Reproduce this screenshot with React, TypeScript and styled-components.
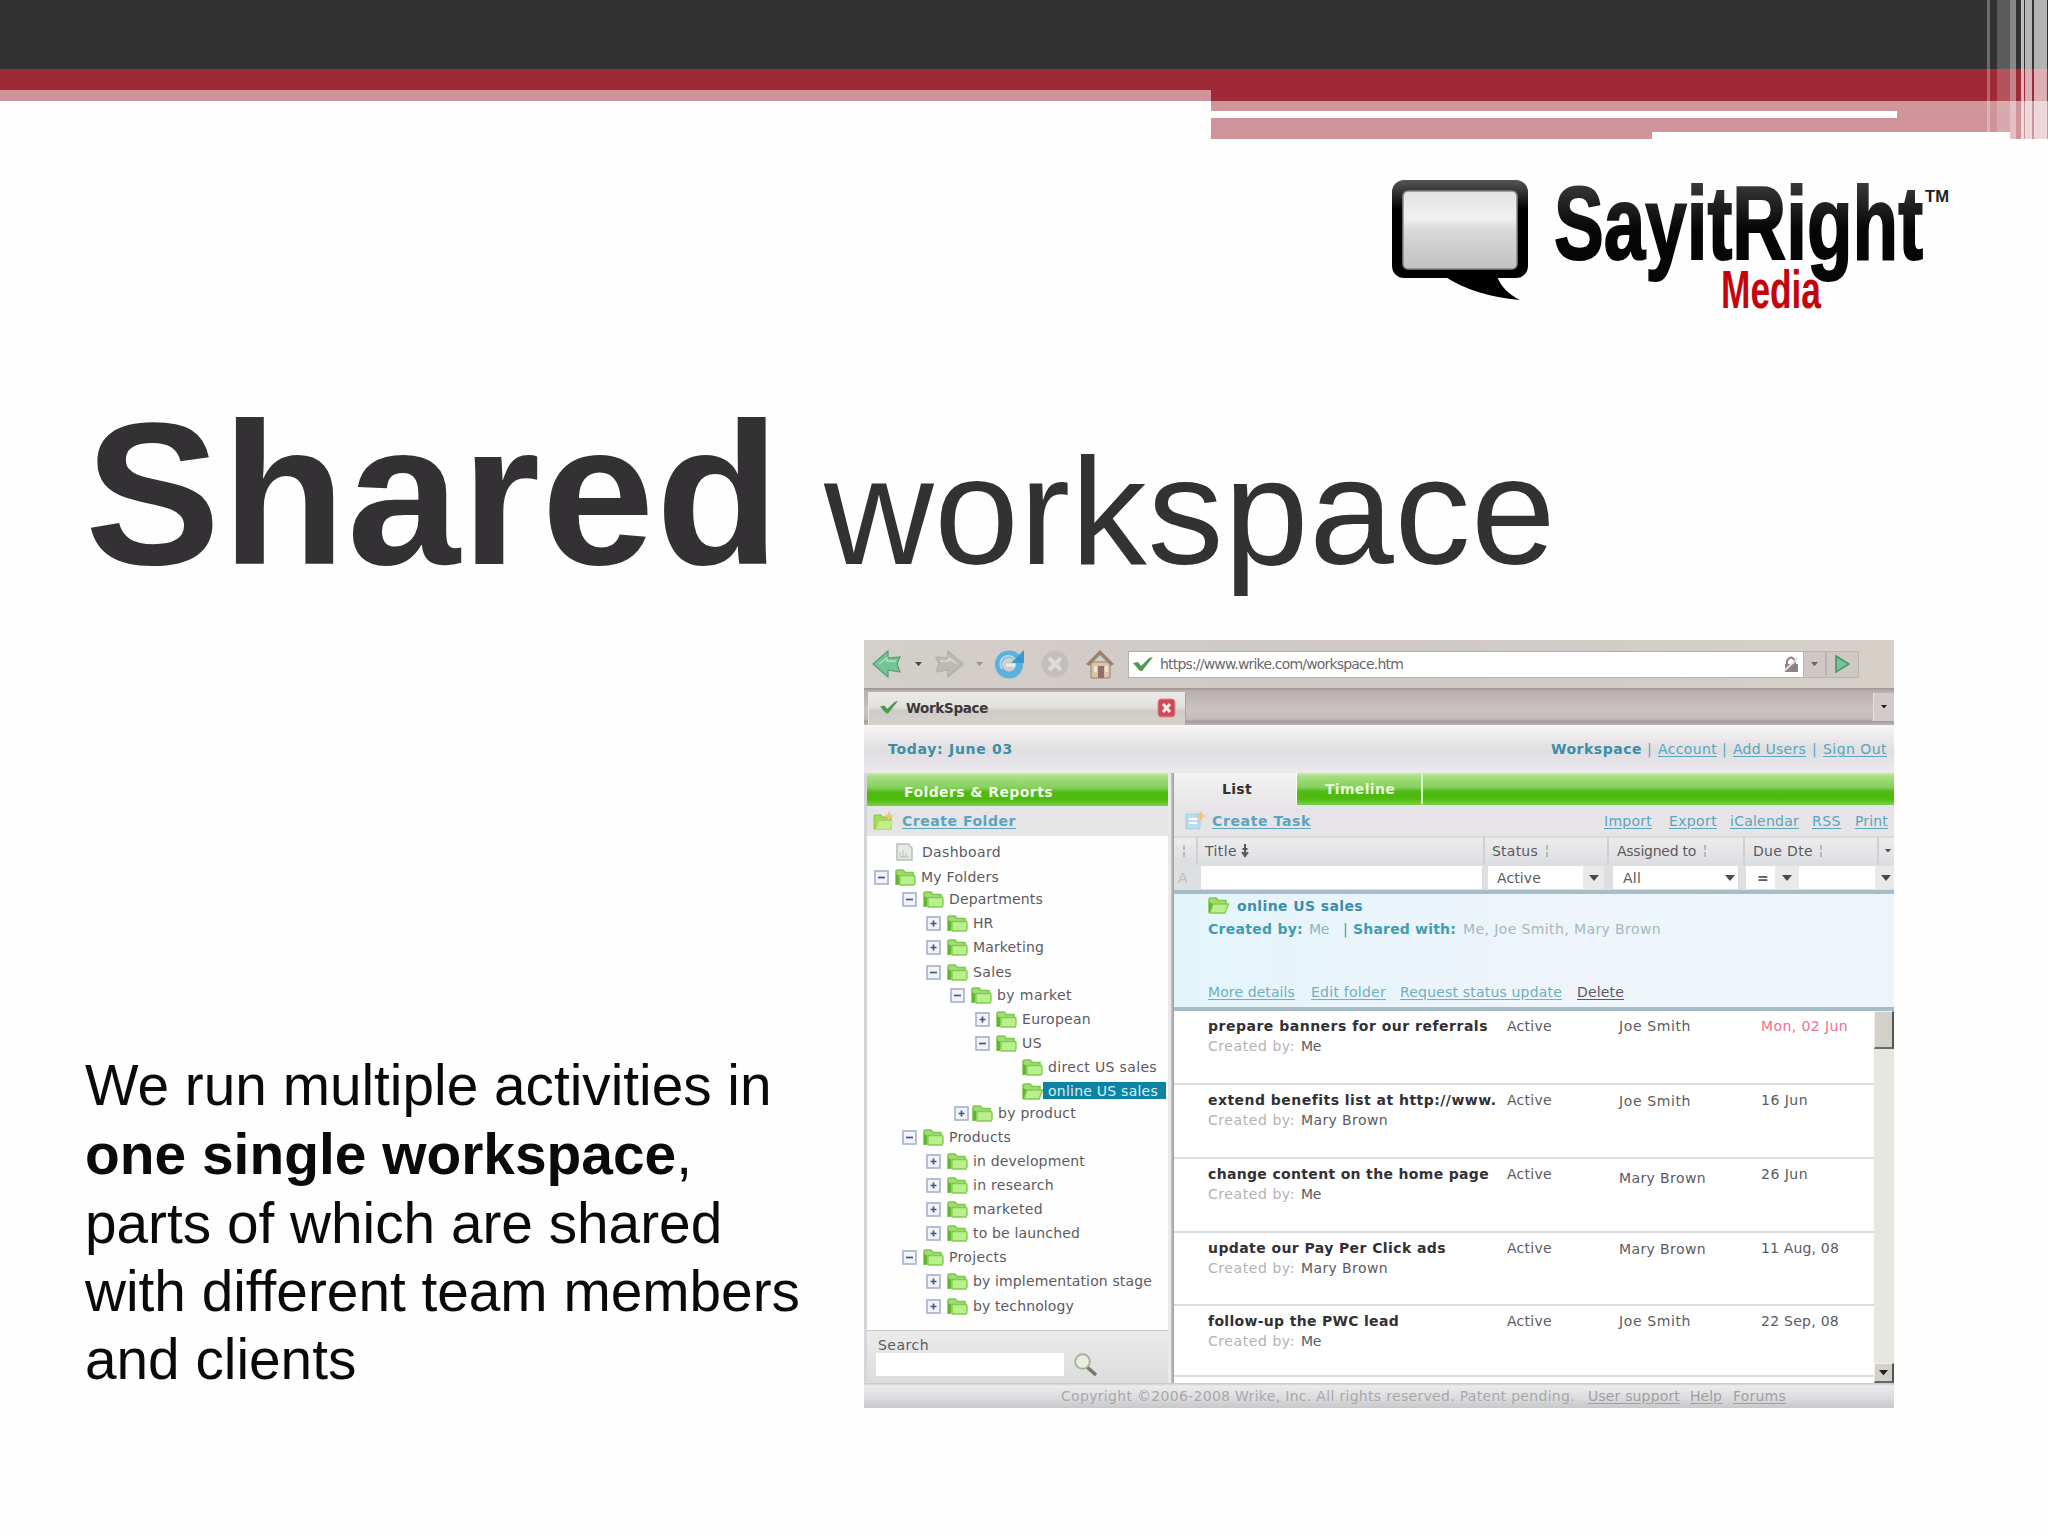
import React, { useLayoutEffect, useRef, useState } from "react";
import styled, { createGlobalStyle, css } from "styled-components";

const Global = createGlobalStyle`
  * { box-sizing: border-box; }
  body { margin: 0; background: #fefefe; font-family: "Liberation Sans", Arial, sans-serif; }
  h1, p { margin: 0; font-weight: normal; }
`;

/* ---------- slide ---------- */
const Slide = styled.div`
  width: 2048px;
  height: 1536px;
  overflow: hidden;
  background: #fefefe;
  display: flex;
  flex-direction: column;
`;
const Banner = styled.header`
  position: relative;
  height: 139px;
  flex: none;
`;
const Band = styled.div<{ h: number; c: string }>`
  height: ${(p) => p.h}px;
  background: ${(p) => p.c};
`;
const BandRow = styled.div`
  display: grid;
  grid-template-columns: 1211px 1fr;
`;
const WhiteRule = styled.div`
  height: 7px;
  background: #d0939a;
  &::before {
    content: "";
    display: block;
    height: 7px;
    width: 686px;
    background: #fff;
  }
`;
const Notch = styled.div`
  position: absolute;
  left: 1652px;
  top: 132px;
  width: 358px;
  height: 7px;
  background: #fefefe;
`;
const Stripe = styled.div<{ x: number; w: number; a: number }>`
  position: absolute;
  top: 0;
  left: ${(p) => p.x}px;
  width: ${(p) => p.w}px;
  height: 139px;
  background: rgba(255, 255, 255, ${(p) => p.a});
`;
const LogoRow = styled.div`
  height: 191px;
  padding: 31px 88px 0 0;
  display: flex;
  justify-content: flex-end;
  flex: none;
`;
const Heading = styled.h1`
  height: 310px;
  flex: none;
  padding: 48px 0 0 85px;
  color: #333134;
  font-size: 152px;
  line-height: 232px;
  letter-spacing: 0.65px;
  white-space: nowrap;
  b { font-size: 203px; letter-spacing: 1.3px; }
`;
const Content = styled.main`
  display: flex;
  align-items: flex-start;
`;
const Blurb = styled.p`
  width: 864px;
  flex: none;
  padding: 412px 0 0 85px;
  font-size: 56.75px;
  line-height: 68.3px;
  color: #0a0a0a;
  white-space: nowrap;
  b { font-size: 56.9px; }
`;

/* ---------- fitted text ---------- */
const Label = styled.span<{ $ml?: number; $b?: boolean; $u?: boolean; $c?: string; $s?: number; $dy?: number }>`
  display: inline-block;
  flex: none;
  width: max-content;
  white-space: pre;
  font-family: "DejaVu Sans", Verdana, sans-serif;
  font-size: ${(p) => p.$s ?? 14}px;
  line-height: 20px;
  font-weight: ${(p) => (p.$b ? 700 : 400)};
  color: ${(p) => p.$c ?? "#5c5a60"};
  margin-left: ${(p) => p.$ml ?? 0}px;
  margin-top: ${(p) => p.$dy ?? 0}px;
  ${(p) => p.$u && css`text-decoration: underline; text-underline-offset: 2px;`}
`;
type TProps = { children: string; w: number; ml?: number; b?: boolean; u?: boolean; c?: string; s?: number; dy?: number };
function T({ children, w, ml, b, u, c, s, dy }: TProps) {
  const ref = useRef<HTMLSpanElement>(null);
  const [ls, setLs] = useState(0);
  useLayoutEffect(() => {
    if (ref.current) setLs((w - ref.current.getBoundingClientRect().width) / children.length);
  }, []);
  return (
    <Label ref={ref} $ml={ml} $b={b} $u={u} $c={c} $s={s} $dy={dy} style={{ letterSpacing: ls }}>
      {children}
    </Label>
  );
}

/* ---------- browser window ---------- */
const Window = styled.section`
  width: 1030px;
  height: 768px;
  flex: none;
  overflow: hidden;
  display: flex;
  flex-direction: column;
  background: #fff;
`;
const Bar = styled.div<{ h: number; bg: string }>`
  height: ${(p) => p.h}px;
  flex: none;
  display: flex;
  align-items: center;
  background: ${(p) => p.bg};
`;
const Gap = styled.span<{ w: number }>`
  width: ${(p) => p.w}px;
  flex: none;
`;
const Grow = styled.span`
  flex: 1;
`;
const UrlBox = styled.div`
  width: 675px;
  height: 27px;
  margin-left: 14px;
  background: #fff;
  border: 1px solid #b4aeac;
  border-right: 0;
  display: flex;
  align-items: center;
  padding: 0 3px 0 4px;
`;
const NavButton = styled.div<{ w: number }>`
  width: ${(p) => p.w}px;
  height: 27px;
  border: 1px solid #bbb5b1;
  background: #cdc8c3;
  display: flex;
  align-items: center;
  justify-content: center;
`;
const Tab = styled.div`
  width: 318px;
  height: 33px;
  margin: 3px 0 0 4px;
  display: flex;
  align-items: center;
  border: 1px solid #e9e7e4;
  border-right-color: #aaa3a1;
  border-bottom: 0;
  background: linear-gradient(#eceae6, #e3e1dc 45%, #cfcbc7 55%, #d5d1cd);
  padding: 0 9px 2px 11px;
`;
const TabMenu = styled.div`
  width: 21px;
  height: 28px;
  background: #d1ccc9;
  border-left: 1px solid #e6e2e0;
  display: flex;
  align-items: center;
  justify-content: center;
`;
const Panes = styled.div`
  height: 610px;
  display: flex;
`;
const Sidebar = styled.div`
  width: 307px;
  flex: none;
  display: flex;
  flex-direction: column;
  border-left: 3px solid #d5d4d8;
  border-right: 3px solid #e9e9e9;
`;
const Divider = styled.div`
  width: 3px;
  background: linear-gradient(90deg, #c9c9c9, #9a9a9e);
`;
const Tasks = styled.div`
  width: 720px;
  flex: none;
  display: flex;
  flex-direction: column;
`;
const green = "linear-gradient(#c3e9a6, #a4df7f 12%, #86cf5c 45%, #4fb914 58%, #4dbb0b 80%, #7dd04c)";
const Tree = styled.div`
  height: 494px;
  padding-top: 4px;
  background: #fefefe;
`;
const TreeRow = styled.div<{ h: number }>`
  height: ${(p) => p.h}px;
  display: flex;
  align-items: flex-start;
  & > * { height: 24px; line-height: 24px; }
`;
const TreeCell = styled.span<{ w: number }>`
  width: ${(p) => p.w}px;
  flex: none;
  display: flex;
  align-items: center;
`;
const Selected = styled.span`
  display: flex;
  align-items: center;
  && { height: 17px; margin-top: 3px; line-height: 17px; }
  width: 123px;
  background: #0d83a3;
  margin-left: -5px;
`;
const SearchBox = styled.div`
  height: 53px;
  flex: none;
  border-top: 1px solid #c9c9c9;
  background: linear-gradient(#ebebeb, #dcdcdc);
  padding: 4px 0 0 9px;
`;
const SearchLine = styled.div`
  display: flex;
  align-items: center;
  gap: 9px;
  margin-top: -2px;
`;
const Field = styled.div<{ w: number }>`
  width: ${(p) => p.w}px;
  height: 23px;
  flex: none;
  display: flex;
  align-items: center;
  background: #fff;
`;
const DropCell = styled.div<{ w: number }>`
  width: ${(p) => p.w}px;
  height: 23px;
  background: #e9e9ea;
  display: flex;
  align-items: center;
  justify-content: center;
  flex: none;
`;
const ListTab = styled.div`
  width: 123px;
  height: 33px;
  background: linear-gradient(#f4f3f4, #e7e5e7);
  display: flex;
  align-items: center;
  border-right: 1px solid #fff;
`;
const TimelineTab = styled.div`
  width: 124px;
  height: 31px;
  align-self: flex-start;
  display: flex;
  align-items: center;
  border-right: 2px solid #d5f3c3;
`;
const Col = styled.div<{ w: number }>`
  width: ${(p) => p.w}px;
  height: 100%;
  flex: none;
  display: flex;
  align-items: center;
  border-right: 2px solid #d0d0d2;
`;
const Summary = styled.div`
  height: 121px;
  flex: none;
  border-top: 4px solid #a6bcc6;
  border-bottom: 4px solid #a6bcc6;
  background: linear-gradient(90deg, #e3f5fb, #eef4fa 50%, #edf5fb);
  padding: 0 0 0 34px;
`;
const Line = styled.div<{ h: number; top?: number }>`
  height: ${(p) => p.h}px;
  margin-top: ${(p) => p.top ?? 0}px;
  display: flex;
  align-items: center;
`;
const ListBody = styled.div`
  flex: 1;
  display: flex;
  overflow: hidden;
`;
const Rows = styled.div`
  width: 700px;
`;
const TaskRow = styled.div<{ h: number }>`
  height: ${(p) => p.h}px;
  border-bottom: 2px solid #dcdcde;
  padding: 5px 0 0 34px;
  display: grid;
  grid-template-columns: 299px 112px 142px 1fr;
  align-items: start;
`;
const TaskTitle = styled.div`
  display: flex;
  flex-direction: column;
  align-items: flex-start;
`;
const Scroll = styled.div`
  width: 20px;
  background: #e6e7df;
  display: flex;
  flex-direction: column;
  justify-content: space-between;
`;
const Thumb = styled.div<{ h: number }>`
  height: ${(p) => p.h}px;
  background: #d3d0c9;
  border: 1px solid #efeeea;
  border-right: 2px solid #55534f;
  border-bottom: 2px solid #6b6965;
  display: flex;
  align-items: center;
  justify-content: center;
`;

/* ---------- icons ---------- */
const Caret = ({ s = 10, c = "#4a4a4a" }: { s?: number; c?: string }) => (
  <svg width={s} height={s * 0.6} viewBox="0 0 10 6"><path d="M0 0h10L5 6z" fill={c} /></svg>
);
const Check = ({ s = 20 }: { s?: number }) => (
  <svg width={s} height={s * 0.75} viewBox="0 0 20 15"><path d="M0 6l5-1 3 4L16 1l4-1L9 14H7z" fill="#4d9a50" /></svg>
);
const Folder = ({ open }: { open?: boolean }) => (
  <svg width="21" height="17" viewBox="0 0 21 17">
    <path d="M1 16V2.500Q1 1 2.500 1H8l2.500 2.500H18V7" fill="#9fdd73" stroke="#7cc94c" strokeWidth="1.600" />
    <path d="M1 15.500V5l3 1.500V16z" fill="#62b62d" />
    <path d={open ? "M5 7h15.500L17 16H2z" : "M5 6.500h14.500L20 8v6l-1 2H5z"} fill="#b9f08d" stroke="#82cc52" strokeWidth="1.400" />
  </svg>
);
const Toggle = ({ plus }: { plus?: boolean }) => (
  <svg width="15" height="15" viewBox="0 0 15 15">
    <rect x="1" y="1" width="13" height="13" fill="#f0f3f8" stroke="#a5afca" strokeWidth="1.600" />
    <path d={plus ? "M4.500 7.500h6M7.500 4.500v6" : "M4 7.500h7"} stroke="#4c5680" strokeWidth="1.700" />
  </svg>
);
const Page = () => (
  <svg width="17" height="18" viewBox="0 0 17 18">
    <path d="M1 1h11l4 4v12H1z" fill="#e7ebe6" stroke="#b7bdb7" strokeWidth="1.500" />
    <path d="M4 14V9M7 14V7M10 14v-4M4 14h9" stroke="#c3cbc2" strokeWidth="1.300" />
  </svg>
);
const NavArrow = ({ fill, line, flip }: { fill: string; line: string; flip?: boolean }) => (
  <svg width="30" height="28" viewBox="0 0 30 28">
    <g transform={flip ? "translate(30 0) scale(-1 1)" : undefined}>
      <path d="M1 14L16 1v7l12-1-3 7 3 8-12-2v7z" fill={fill} stroke={line} strokeWidth="1.200" />
      <path d="M7 14l8-6v3h9" fill="none" stroke="#fff" strokeOpacity=".45" strokeWidth="1.500" />
    </g>
  </svg>
);
const Reload = () => (
  <svg width="31" height="30" viewBox="0 0 31 30">
    <circle cx="15" cy="15.500" r="10.500" fill="none" stroke="#5cb0dc" strokeWidth="7" />
    <path d="M17 14L30 1v13z" fill="#3e98cc" />
    <path d="M8 20a8 8 0 0 1 13-10" fill="none" stroke="#a9dbf3" strokeWidth="2" />
    <path d="M12 16h9" stroke="#dff1fa" strokeWidth="3" />
  </svg>
);
const Stop = () => (
  <svg width="30" height="30" viewBox="0 0 30 30">
    <circle cx="15" cy="15" r="13.500" fill="#c3bfbb" />
    <path d="M9 9l12 12M21 9L9 21" stroke="#dedbd8" strokeWidth="4" />
  </svg>
);
const Home = () => (
  <svg width="28" height="30" viewBox="0 0 28 30">
    <path d="M5 13h19v16H5z" fill="#dcc3a8" stroke="#98816c" />
    <path d="M0 15L14 1l14 14-3 2L14 6 3 17z" fill="#9c8170" />
    <path d="M12 17h6v12h-6z" fill="#8c7362" />
    <path d="M8 17h3v6H8zM19 17h3v6h-3z" fill="#f0e3d4" />
  </svg>
);
const Lock = () => (
  <svg width="17" height="18" viewBox="0 0 17 18">
    <path d="M2 9h13v8H2z" fill="#8e8186" /><path d="M4 9V6q4-7 8 0v3" fill="none" stroke="#8e8186" strokeWidth="2" />
    <path d="M1 16L15 3" stroke="#e6e0e1" strokeWidth="2" />
  </svg>
);
const Play = () => (
  <svg width="15" height="18" viewBox="0 0 15 18"><path d="M1 1l13 8L1 17z" fill="#7fbf97" stroke="#45966a" strokeWidth="1.600" /></svg>
);
const CloseTab = () => (
  <svg width="19" height="20" viewBox="0 0 19 20">
    <rect x="1" y="1" width="17" height="18" rx="3" fill="#cf4a58" stroke="#dd8d95" />
    <path d="M6 6l7 8M13 6l-7 8" stroke="#fbe9ea" strokeWidth="3" />
  </svg>
);
const NewItem = ({ blue }: { blue?: boolean }) => (
  <svg width="22" height="20" viewBox="0 0 22 20">
    <path d={blue ? "M1 3h14v15H1z" : "M1 4h7l2 2h8v12H1z"} fill={blue ? "#b9dcf2" : "#a4d95a"} stroke={blue ? "#a5cee8" : "#8cc64a"} />
    <path d={blue ? "M4 8h8M4 12h8" : "M6 10h14l-3 8H3z"} fill={blue ? "none" : "#c7ec85"} stroke={blue ? "#fff" : "none"} strokeWidth="2" />
    <path d="M16 0l1.500 3.500L21 5l-3.500 1.500L16 10l-1.500-3.500L11 5l3.500-1.500z" fill="#f6c274" />
  </svg>
);
const SortMark = ({ dark }: { dark?: boolean }) => (
  <svg width="8" height="14" viewBox="0 0 8 14">
    <path d={dark ? "M4 0v12M1 8l3 4 3-4M1.500 5h5" : "M4 1v5M4 8v5"} fill="none" stroke={dark ? "#555" : "#b9b9bb"} strokeWidth="2" />
  </svg>
);
const Magnifier = () => (
  <svg width="25" height="23" viewBox="0 0 25 23">
    <path d="M14 14l9 8" stroke="#77786a" strokeWidth="3.500" />
    <circle cx="9.500" cy="8.500" r="7.300" fill="#e8eedf" stroke="#a9b39a" strokeWidth="2" />
  </svg>
);
const Logo = () => (
  <svg width="580" height="150" viewBox="1380 170 580 150">
    <defs>
      <linearGradient id="frame" x1="0" y1="0" x2="0" y2="1">
        <stop offset="0" stopColor="#555" /><stop offset=".12" stopColor="#333" /><stop offset=".3" stopColor="#000" />
      </linearGradient>
      <linearGradient id="glass" x1="0" y1="0" x2="0" y2="1">
        <stop offset="0" stopColor="#e4e3e4" /><stop offset=".35" stopColor="#f0f0f0" />
        <stop offset=".5" stopColor="#dad9da" /><stop offset="1" stopColor="#c2c1c2" />
      </linearGradient>
      <linearGradient id="ink" x1="0" y1="0" x2="0" y2="1">
        <stop offset="0.150" stopColor="#3a383a" /><stop offset=".55" stopColor="#060606" />
      </linearGradient>
    </defs>
    <path d="M1444 276Q1474 296 1520 300Q1502 291 1497 276z" fill="#000" />
    <rect x="1392" y="180" width="136" height="98" rx="12" fill="url(#frame)" />
    <rect x="1403" y="191" width="114" height="78" rx="5" fill="url(#glass)" stroke="#8a898a" strokeWidth="1.500" />
    <text x="1554" y="259" fontFamily="'Liberation Sans',sans-serif" fontWeight="700" fontSize="103" textLength="369" lengthAdjust="spacingAndGlyphs" fill="url(#ink)" stroke="url(#ink)" strokeWidth="2">SayitRight</text>
    <text x="1925" y="202" fontFamily="'Liberation Sans',sans-serif" fontWeight="700" fontSize="16" textLength="24" lengthAdjust="spacingAndGlyphs" fill="#222">TM</text>
    <text x="1721" y="308" fontFamily="'Liberation Sans',sans-serif" fontWeight="700" fontSize="53" textLength="100" lengthAdjust="spacingAndGlyphs" fill="#c3060b">Media</text>
  </svg>
);

/* ---------- data ---------- */
type Node = { t: string; w: number; h: number; pad: number; k: "page" | "plus" | "minus" | "leaf" | "sel"; gap?: number };
const tree: Node[] = [
  { t: "Dashboard", w: 79, h: 25, pad: 29, k: "page" },
  { t: "My Folders", w: 78, h: 22, pad: 7, k: "minus" },
  { t: "Departments", w: 94, h: 24, pad: 35, k: "minus" },
  { t: "HR", w: 20, h: 24, pad: 59, k: "plus" },
  { t: "Marketing", w: 71, h: 25, pad: 59, k: "plus" },
  { t: "Sales", w: 39, h: 23, pad: 59, k: "minus" },
  { t: "by market", w: 75, h: 24, pad: 83, k: "minus" },
  { t: "European", w: 69, h: 24, pad: 108, k: "plus" },
  { t: "US", w: 20, h: 24, pad: 108, k: "minus" },
  { t: "direct US sales", w: 109, h: 24, pad: 155, k: "leaf" },
  { t: "online US sales", w: 110, h: 22, pad: 155, k: "sel" },
  { t: "by product", w: 78, h: 24, pad: 87, k: "plus", gap: 18 },
  { t: "Products", w: 62, h: 24, pad: 35, k: "minus" },
  { t: "in development", w: 112, h: 24, pad: 59, k: "plus" },
  { t: "in research", w: 81, h: 24, pad: 59, k: "plus" },
  { t: "marketed", w: 70, h: 24, pad: 59, k: "plus" },
  { t: "to be launched", w: 107, h: 24, pad: 59, k: "plus" },
  { t: "Projects", w: 58, h: 24, pad: 35, k: "minus" },
  { t: "by implementation stage", w: 179, h: 25, pad: 59, k: "plus" },
  { t: "by technology", w: 101, h: 24, pad: 59, k: "plus" },
];
const tasks = [
  { t: "prepare banners for our referrals", w: 280, by: "Me", bw: 20, who: "Joe Smith", ww: 72, dy: 0, d: "Mon, 02 Jun", dw: 87, late: true, h: 74 },
  { t: "extend benefits list at http://www.", w: 288, by: "Mary Brown", bw: 87, who: "Joe Smith", ww: 72, dy: 1, d: "16 Jun", dw: 47, h: 74 },
  { t: "change content on the home page", w: 281, by: "Me", bw: 20, who: "Mary Brown", ww: 87, dy: 4, d: "26 Jun", dw: 47, h: 74 },
  { t: "update our Pay Per Click ads", w: 238, by: "Mary Brown", bw: 87, who: "Mary Brown", ww: 87, dy: 1, d: "11 Aug, 08", dw: 78, h: 73 },
  { t: "follow-up the PWC lead", w: 191, by: "Me", bw: 20, who: "Joe Smith", ww: 72, dy: 0, d: "22 Sep, 08", dw: 78, h: 71 },
];
const teal = "#3d8ea8";
const link = "#5aa5c0";
const stripes = [[1987, 3, 0.28], [1997, 13, 0.2], [2010, 6, 0.42], [2021, 3, 0.68], [2025, 7, 0.64], [2034, 13, 0.63]];

export default function App() {
  return (
    <Slide>
      <Global />
      <Banner>
        <Band h={69} c="#323232" />
        <BandRow>
          <div><Band h={21} c="#9f2936" /><Band h={11} c="#d0939a" /></div>
          <div>
            <Band h={32} c="#9f2936" /><Band h={10} c="#cf979c" />
            <WhiteRule /><Band h={21} c="#d0939a" />
          </div>
        </BandRow>
        <Notch />
        {stripes.map(([x, w, a]) => <Stripe key={x} x={x} w={w} a={a} />)}
      </Banner>
      <LogoRow><Logo /></LogoRow>
      <Heading><b>Shared</b> workspace</Heading>
      <Content>
        <Blurb>
          We run multiple activities in<br /><b>one single workspace</b>,<br />parts of which are shared<br />
          with different team members<br />and clients
        </Blurb>
        <Window>
          <Bar h={48} bg="linear-gradient(90deg, #d3cfc9, #d0c9c7 50%, #d5d1c8)">
            <Gap w={8} /><NavArrow fill="#74c496" line="#4fa077" /><Gap w={13} /><Caret s={7} />
            <Gap w={12} /><NavArrow flip fill="#bdb9b5" line="#b2aeaa" /><Gap w={12} /><Caret s={7} c="#99958f" />
            <Gap w={11} /><Reload /><Gap w={15} /><Stop /><Gap w={16} /><Home />
            <UrlBox><Check /><T ml={7} w={243} s={14} c="#6b676b">https://www.wrike.com/workspace.htm</T><Grow /><Lock /></UrlBox>
            <NavButton w={23}><Caret s={7} c="#6b6668" /></NavButton><NavButton w={33}><Play /></NavButton>
          </Bar>
          <Bar h={37} bg="linear-gradient(#9c9492, #b9b0ae 8%, #cbc3c1 60%, #c4bcba 84%, #a39c9a 90%, #bdb6b3)">
            <Tab><Check s={18} /><T ml={8} w={82} b s={13.5} c="#3a393b">WorkSpace</T><Grow /><CloseTab /></Tab>
            <Grow /><TabMenu><Caret s={6} c="#222" /></TabMenu>
          </Bar>
          <Bar h={48} bg="linear-gradient(#f8f7f7, #e6e2e5 40%, #dde0de 55%, #e5e2e8 75%, #ecebe9)">
            <T ml={24} w={125} b c={teal}>Today: June 03</T><Grow />
            <T w={91} b c={teal}>Workspace</T><T ml={5} w={5} c={link}>|</T>
            <T ml={6} w={59} u c={link}>Account</T><T ml={5} w={5} c={link}>|</T>
            <T ml={6} w={73} u c={link}>Add Users</T><T ml={6} w={5} c={link}>|</T>
            <T ml={6} w={64} u c={link}>Sign Out</T><Gap w={7} />
          </Bar>
          <Panes>
            <Sidebar>
              <Bar h={33} bg={green}><T ml={37} w={149} b c="#f2fbe9" dy={4}>Folders &amp; Reports</T></Bar>
              <Bar h={30} bg="#e5e5e6"><Gap w={6} /><NewItem /><T ml={7} w={114} b u c={link}>Create Folder</T></Bar>
              <Tree>
                {tree.map((n) => (
                  <TreeRow key={n.t} h={n.h}>
                    <Gap w={n.pad} />
                    {(n.k === "plus" || n.k === "minus") && <TreeCell w={n.gap ?? 21}><Toggle plus={n.k === "plus"} /></TreeCell>}
                    <TreeCell w={26}>{n.k === "page" ? <Page /> : <Folder open={n.k === "sel"} />}</TreeCell>
                    {n.k === "sel" ? <Selected><T ml={5} w={n.w} c="#d9f1f7">{n.t}</T></Selected> : <T w={n.w}>{n.t}</T>}
                  </TreeRow>
                ))}
              </Tree>
              <SearchBox>
                <T ml={2} w={51}>Search</T>
                <SearchLine><Field w={188} /><Magnifier /></SearchLine>
              </SearchBox>
            </Sidebar>
            <Divider />
            <Tasks>
              <Bar h={32} bg={green}>
                <ListTab><T ml={48} w={30} b c="#333">List</T></ListTab>
                <Gap w={2} /><TimelineTab><T ml={26} w={70} b c="#e6f8d8">Timeline</T></TimelineTab>
              </Bar>
              <Bar h={31} bg="#e6e4e6">
                <Gap w={11} /><NewItem blue /><T ml={5} w={99} b u c={link}>Create Task</T><Grow />
                <T w={48} u c={link}>Import</T><T ml={17} w={48} u c={link}>Export</T>
                <T ml={13} w={69} u c={link}>iCalendar</T><T ml={13} w={29} u c={link}>RSS</T>
                <T ml={14} w={33} u c={link}>Print</T><Gap w={6} />
              </Bar>
              <Bar h={29} bg="linear-gradient(#d2d2d4, #ececed 10%, #dcdde0)">
                <Col w={24}><Gap w={6} /><SortMark /></Col>
                <Col w={287}><T ml={7} w={32}>Title</T><Gap w={4} /><SortMark dark /></Col>
                <Col w={124}><T ml={7} w={46}>Status</T><Gap w={5} /><SortMark /></Col>
                <Col w={136}><T ml={8} w={79}>Assigned to</T><Gap w={5} /><SortMark /></Col>
                <Col w={134}><T ml={8} w={60}>Due Dte</T><Gap w={4} /><SortMark /></Col>
                <Gap w={6} /><Caret s={6} />
              </Bar>
              <Bar h={25} bg="#dedfe1">
                <Gap w={4} /><T w={12} c="#bcbcbc">A</T><Gap w={11} />
                <Field w={281} /><Gap w={6} />
                <Field w={95}><T ml={9} w={44}>Active</T></Field><DropCell w={21}><Caret /></DropCell><Gap w={9} />
                <Field w={125}><T ml={10} w={18}>All</T><Grow /><Caret /><Gap w={3} /></Field><Gap w={8} />
                <Field w={29}><T ml={11} w={11} b>=</T></Field><DropCell w={24}><Caret /></DropCell>
                <Field w={76} /><DropCell w={21}><Caret /></DropCell>
              </Bar>
              <Summary>
                <Line h={23}><Folder open /><T ml={8} w={126} b c={teal}>online US sales</T></Line>
                <Line h={23}>
                  <T w={95} b c="#3f9db0">Created by:</T><T ml={6} w={20} c="#8fb6c2">Me</T>
                  <T ml={14} w={5} c="#3f9db0">|</T><T ml={5} w={103} b c="#3f9db0">Shared with:</T>
                  <T ml={7} w={198} c="#9fbac2">Me, Joe Smith, Mary Brown</T>
                </Line>
                <Line h={21} top={41}>
                  <T w={87} u c="#72adc0">More details</T><T ml={16} w={75} u c="#72adc0">Edit folder</T>
                  <T ml={14} w={162} u c="#72adc0">Request status update</T><T ml={15} w={47} u>Delete</T>
                </Line>
              </Summary>
              <ListBody>
                <Rows>
                  {tasks.map((k) => (
                    <TaskRow key={k.t} h={k.h}>
                      <TaskTitle>
                        <T w={k.w} b c="#333035">{k.t}</T>
                        <Line h={20}><T w={87} c="#b3b1b5">Created by:</T><T ml={6} w={k.bw}>{k.by}</T></Line>
                      </TaskTitle>
                      <T w={45}>Active</T>
                      <T w={k.ww} dy={k.dy}>{k.who}</T>
                      <T w={k.dw} c={k.late ? "#f0708a" : undefined}>{k.d}</T>
                    </TaskRow>
                  ))}
                </Rows>
                <Scroll><Thumb h={38} /><Thumb h={20}><Caret s={9} c="#222" /></Thumb></Scroll>
              </ListBody>
            </Tasks>
          </Panes>
          <Bar h={25} bg="linear-gradient(#c4c4c6, #ebebed 12%, #dcdcde 60%, #c8c8ca)">
            <T ml={197} w={514} c="#a8a8aa">Copyright ©2006-2008 Wrike, Inc. All rights reserved. Patent pending.</T>
            <T ml={13} w={92} u c="#a0a0a2">User support</T><T ml={10} w={32} u c="#a0a0a2">Help</T>
            <T ml={11} w={53} u c="#a0a0a2">Forums</T>
          </Bar>
        </Window>
      </Content>
    </Slide>
  );
}
